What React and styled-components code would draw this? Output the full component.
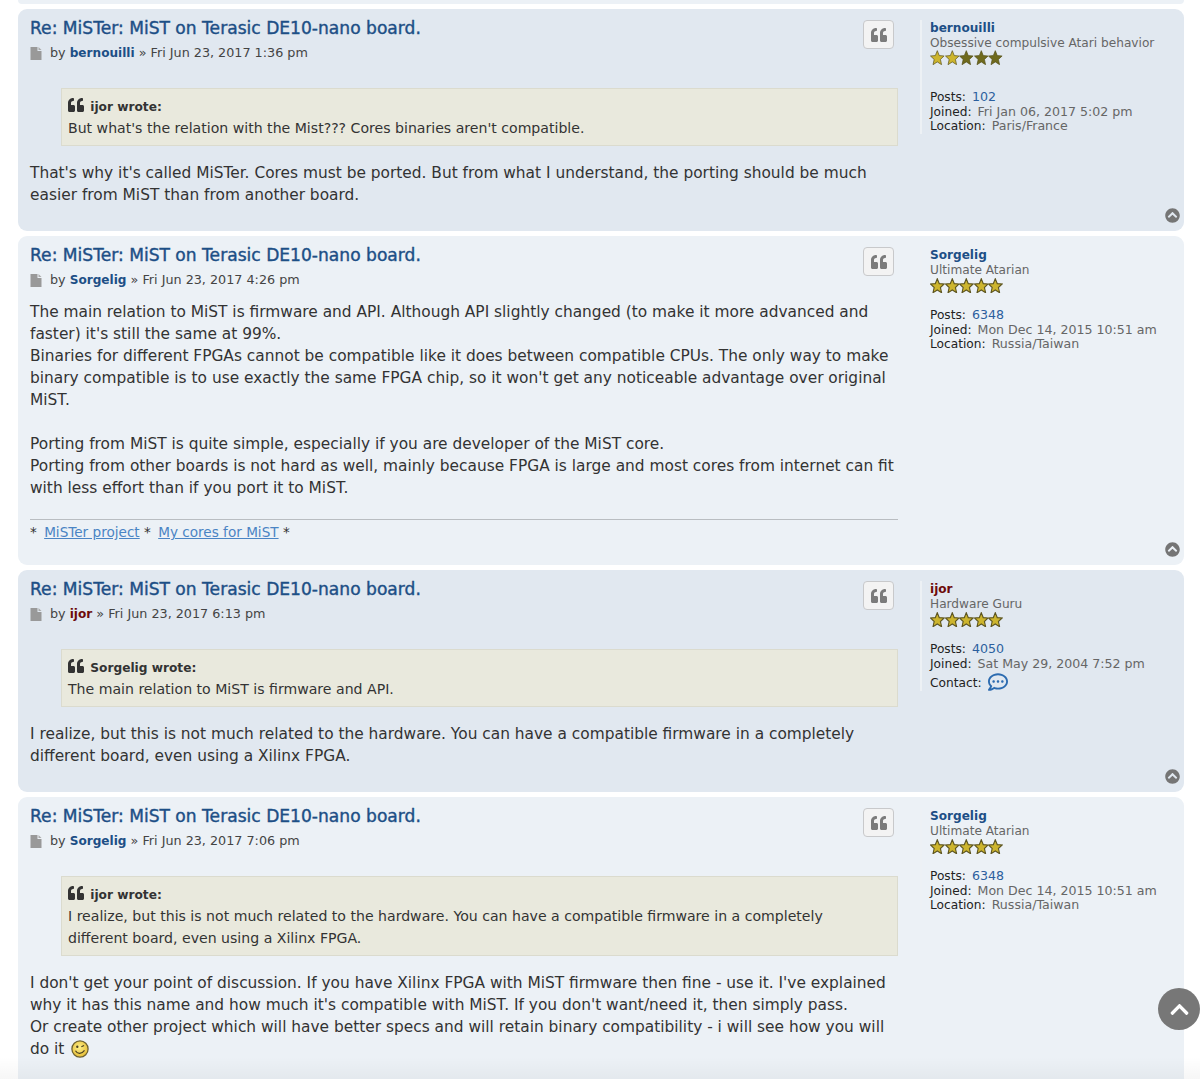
import React from "react";
import styled, { createGlobalStyle } from "styled-components";
import { FaQuoteLeft, FaChevronCircleUp, FaChevronUp, FaRegCommentDots } from "react-icons/fa";

const GlobalStyle = createGlobalStyle`
    html, body {
        margin: 0;
        background: #fff;
        overflow: hidden;
    }
    body {
        height: 1079px;
        font-family: "DejaVu Sans", Verdana, sans-serif;
        color: #333;
    }
`;

function Star({ on, small }) {
    return (
        <svg width="14.600" height="15" viewBox="0 0 15 14" preserveAspectRatio="none">
            <path
                d="M7.5.6l2 4.6 5 .4-3.800 3.200 1.200 4.900-4.400-2.600-4.400 2.600 1.200-4.900L.5 5.600l5-.4z"
                fill={on ? "#cdb52e" : "#6f6a1d"}
                stroke={on ? "#5d5520" : "#57531c"}
                strokeWidth={small ? 0.7 : 1.1}
            />
        </svg>
    );
}

function Stars({ lit, small }) {
    return (
        <StarRow $small={small}>
            {[0, 1, 2, 3, 4].map((i) => (
                <Star key={i} on={i < lit} small={small} />
            ))}
        </StarRow>
    );
}

function FileIcon() {
    return (
        <svg width="12" height="13" viewBox="0 0 12 13">
            <path d="M.5 0h7v4h4v9H.5z" fill="#999" />
            <path d="M8.500 0l3 3h-3z" fill="#aaa" />
        </svg>
    );
}

function Wink() {
    return (
        <SmileySvg width="18" height="18" viewBox="0 0 20 20">
            <defs>
                <radialGradient id="face" cx="45%" cy="40%" r="60%">
                    <stop offset="0%" stopColor="#fdf08a" />
                    <stop offset="100%" stopColor="#e6bd35" />
                </radialGradient>
            </defs>
            <circle cx="10" cy="10" r="9" fill="url(#face)" stroke="#6e6230" strokeWidth="1.400" />
            <circle cx="7" cy="7.500" r="1.300" fill="#4a4020" />
            <path d="M11.500 7.500l3-1.500" stroke="#4a4020" strokeWidth="1.300" fill="none" />
            <path d="M5 12c2 3.800 7 3.800 10-.5" stroke="#4a4020" strokeWidth="1.300" fill="none" />
        </SmileySvg>
    );
}

function Post({ dark, author, authorRed, date, children, profile, hideTop }) {
    return (
        <PostBox $dark={dark}>
            <Main>
                <Body>
                    <Head>
                        <div>
                            <Title>Re: MiSTer: MiST on Terasic DE10-nano board.</Title>
                            <Meta>
                                <FileIcon />
                                <span>
                                    by <Author $red={authorRed}>{author}</Author> » {date}
                                </span>
                            </Meta>
                        </div>
                        <QuoteButton>
                            <FaQuoteLeft />
                        </QuoteButton>
                    </Head>
                    {children}
                </Body>
                <Profile>
                    <ProfileName $red={authorRed}>{author}</ProfileName>
                    <Rank>{profile.rank}</Rank>
                    <Stars lit={profile.lit} small={profile.small} />
                    <ProfileLine>
                        <b>Posts:</b> <PostCount>{profile.posts}</PostCount>
                    </ProfileLine>
                    <ProfileLine>
                        <b>Joined:</b> {profile.joined}
                    </ProfileLine>
                    {profile.location && (
                        <ProfileLine>
                            <b>Location:</b> {profile.location}
                        </ProfileLine>
                    )}
                    {profile.contact && (
                        <ContactLine>
                            <b>Contact:</b> <FaRegCommentDots />
                        </ContactLine>
                    )}
                </Profile>
            </Main>
            {!hideTop && (
                <Footer>
                    <FaChevronCircleUp />
                </Footer>
            )}
        </PostBox>
    );
}

const sorgelig = {
    rank: "Ultimate Atarian",
    lit: 5,
    posts: "6348",
    joined: "Mon Dec 14, 2015 10:51 am",
    location: "Russia/Taiwan",
};

export default function App() {
    return (
        <Page>
            <GlobalStyle />
            <Sliver />
            <Post
                dark
                author="bernouilli"
                date="Fri Jun 23, 2017 1:36 pm"
                profile={{
                    rank: "Obsessive compulsive Atari behavior",
                    lit: 2,
                    small: true,
                    posts: "102",
                    joined: "Fri Jan 06, 2017 5:02 pm",
                    location: "Paris/France",
                }}
            >
                <Quote>
                    <QuoteAuthor>
                        <FaQuoteLeft /> ijor wrote:
                    </QuoteAuthor>
                    But what's the relation with the Mist??? Cores binaries aren't compatible.
                </Quote>
                <Text>
                    That's why it's called MiSTer. Cores must be ported. But from what I understand, the porting
                    should be much
                    <br />
                    easier from MiST than from another board.
                </Text>
            </Post>
            <Post author="Sorgelig" date="Fri Jun 23, 2017 4:26 pm" profile={sorgelig}>
                <Text>
                    The main relation to MiST is firmware and API. Although API slightly changed (to make it more
                    advanced and
                    <br />
                    faster) it's still the same at 99%.
                    <br />
                    Binaries for different FPGAs cannot be compatible like it does between compatible CPUs. The only
                    way to make
                    <br />
                    binary compatible is to use exactly the same FPGA chip, so it won't get any noticeable advantage
                    over original
                    <br />
                    MiST.
                    <br />
                    <br />
                    Porting from MiST is quite simple, especially if you are developer of the MiST core.
                    <br />
                    Porting from other boards is not hard as well, mainly because FPGA is large and most cores from
                    internet can fit
                    <br />
                    with less effort than if you port it to MiST.
                </Text>
                <Signature>
                    * <SigLink>MiSTer project</SigLink> * <SigLink>My cores for MiST</SigLink> *
                </Signature>
            </Post>
            <Post
                dark
                author="ijor"
                authorRed
                date="Fri Jun 23, 2017 6:13 pm"
                profile={{
                    rank: "Hardware Guru",
                    lit: 5,
                    posts: "4050",
                    joined: "Sat May 29, 2004 7:52 pm",
                    contact: true,
                }}
            >
                <Quote>
                    <QuoteAuthor>
                        <FaQuoteLeft /> Sorgelig wrote:
                    </QuoteAuthor>
                    The main relation to MiST is firmware and API.
                </Quote>
                <Text>
                    I realize, but this is not much related to the hardware. You can have a compatible firmware in a
                    completely
                    <br />
                    different board, even using a Xilinx FPGA.
                </Text>
            </Post>
            <Post author="Sorgelig" date="Fri Jun 23, 2017 7:06 pm" profile={sorgelig} hideTop>
                <Quote>
                    <QuoteAuthor>
                        <FaQuoteLeft /> ijor wrote:
                    </QuoteAuthor>
                    I realize, but this is not much related to the hardware. You can have a compatible firmware in a
                    completely
                    <br />
                    different board, even using a Xilinx FPGA.
                </Quote>
                <Text>
                    I don't get your point of discussion. If you have Xilinx FPGA with MiST firmware then fine - use
                    it. I've explained
                    <br />
                    why it has this name and how much it's compatible with MiST. If you don't want/need it, then
                    simply pass.
                    <br />
                    Or create other project which will have better specs and will retain binary compatibility - i will
                    see how you will
                    <br />
                    do it <Wink />
                </Text>
                <PostEnd />
            </Post>
            <BottomFade />
            <ScrollTop>
                <FaChevronUp />
            </ScrollTop>
        </Page>
    );
}

const Page = styled.div`
    box-sizing: border-box;
    height: 1079px;
    overflow: hidden;
    padding: 0 16px 0 18px;
    display: flex;
    flex-direction: column;
    gap: 5px;
    position: relative;
`;
const Sliver = styled.div`
    flex-shrink: 0;
    height: 4px;
    background: #ecf1f6;
    border-radius: 0 0 8px 8px;
`;
const PostBox = styled.div`
    flex-shrink: 0;
    background: ${(p) => (p.$dark ? "#e1e8f0" : "#ecf1f6")};
    border-radius: 9px;
    padding: 11px 0 0 12px;
`;
const Main = styled.div`
    display: flex;
    align-items: flex-start;
`;
const Body = styled.div`
    width: 868px;
    flex-shrink: 0;
`;
const Head = styled.div`
    display: flex;
    justify-content: space-between;
    align-items: flex-start;
    height: 54px;
`;
const Title = styled.div`
    font-size: 17.100px;
    line-height: 17px;
    font-weight: 500;
    color: #1d4f86;
    -webkit-text-stroke: 0.4px #1d4f86;
`;
const Meta = styled.div`
    display: flex;
    align-items: center;
    gap: 8px;
    margin-top: 8px;
    font-size: 12.750px;
    line-height: 16px;
    color: #444;
`;
const Author = styled.span`
    font-weight: bold;
    font-size: 12.100px;
    color: ${(p) => (p.$red ? "#6d0a0a" : "#1d4f86")};
`;
const QuoteButton = styled.div`
    box-sizing: border-box;
    width: 31px;
    height: 29px;
    margin: 0 4px 0 0;
    border: 1px solid #c8c9cb;
    border-radius: 4px;
    background: #f3f3f3;
    color: #7b7b7b;
    font-size: 16px;
    display: flex;
    align-items: center;
    justify-content: center;
`;
const Quote = styled.div`
    margin: 14px 0 16px 31px;
    padding: 8px 6px 6px;
    background: #e9e9dd;
    border: 1px solid #dbdbce;
    font-size: 14.100px;
    line-height: 22px;
    color: #333;
`;
const QuoteAuthor = styled.div`
    font-weight: bold;
    font-size: 12.200px;
    line-height: 20px;
    color: #333;
    & svg {
        font-size: 16px;
        vertical-align: -2px;
        margin-right: 2px;
    }
`;
const Text = styled.div`
    font-size: 15.400px;
    line-height: 22px;
    color: #333;
`;
const SmileySvg = styled.svg`
    vertical-align: -4px;
    margin-left: 2px;
`;
const Signature = styled.div`
    margin: 20px 0 -2px;
    padding-top: 2px;
    border-top: 1px solid #b9bdc1;
    font-size: 13.600px;
    line-height: 20px;
    color: #333;
`;
const SigLink = styled.span`
    margin-left: 3px;
    color: #4a84c4;
    text-decoration: underline;
`;
const PostEnd = styled.div`
    height: 40px;
`;
const Profile = styled.div`
    margin-left: 22px;
    padding: 1px 0 0 8px;
    border-left: 2px solid #edf1f5;
    font-size: 12.600px;
    line-height: 14.500px;
    color: #666;
    white-space: nowrap;
`;
const ProfileName = styled.div`
    font-weight: bold;
    font-size: 12.100px;
    color: ${(p) => (p.$red ? "#6d0a0a" : "#1d4f86")};
`;
const Rank = styled.div`
    font-size: 12.150px;
`;
const StarRow = styled.div`
    display: flex;
    height: 15px;
    margin: ${(p) => (p.$small ? "0 0 25px" : "1px 0 15px")};
`;
const ProfileLine = styled.div`
    & b {
        font-weight: normal;
        font-size: 12.200px;
        margin-right: 2px;
        color: #222;
    }
`;
const PostCount = styled.span`
    color: #2c5f9e;
`;
const ContactLine = styled(ProfileLine)`
    display: flex;
    align-items: center;
    gap: 4px;
    height: 16px;
    margin-top: 4px;
    & svg {
        color: #2c6bb0;
        font-size: 20px;
        margin-top: -2px;
    }
`;
const Footer = styled.div`
    display: flex;
    justify-content: flex-end;
    padding: 2px 4px 8px 0;
    color: #757575;
    font-size: 15px;
    line-height: 0;
`;
const BottomFade = styled.div`
    position: absolute;
    left: 0;
    right: 0;
    bottom: 0;
    height: 22px;
    background: linear-gradient(rgba(0, 0, 0, 0), rgba(0, 0, 0, 0.035));
`;
const ScrollTop = styled.div`
    position: absolute;
    left: 1158px;
    top: 988px;
    width: 42px;
    height: 42px;
    border-radius: 50%;
    background: #777;
    color: #fff;
    font-size: 21px;
    display: flex;
    align-items: center;
    justify-content: center;
`;
